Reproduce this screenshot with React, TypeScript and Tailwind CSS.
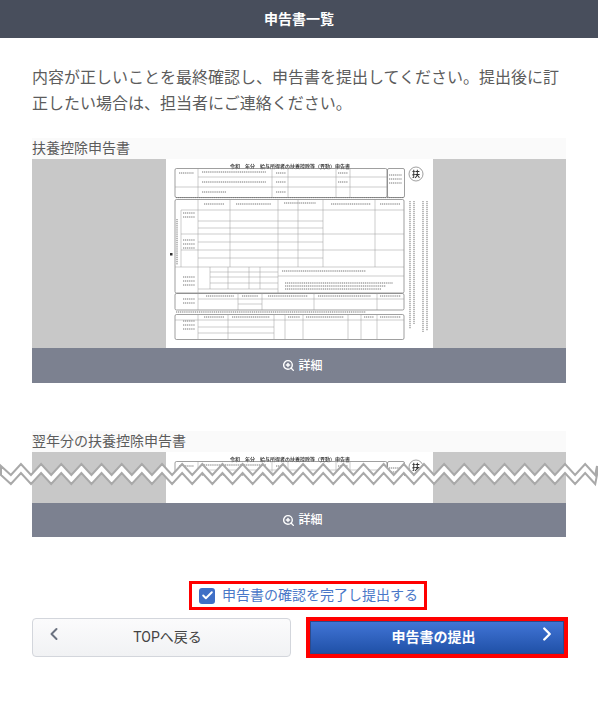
import React from 'react';
import { ChevronLeft, ChevronRight, Check, ZoomIn } from 'lucide-react';

// [x1, y1, x2, y2] for the printed rules of the form
const formLines = [
  // top box
  [32, 9, 32, 38], [106, 9, 106, 38], [122, 9, 122, 38], [170, 9, 170, 38], [184, 9, 184, 38],
  [32, 18, 221, 18], [32, 28, 221, 28], [9, 28, 32, 28],
  // main box
  [15, 51, 15, 108], [32, 40, 32, 134], [64, 40, 64, 108], [112, 40, 112, 134], [132, 40, 132, 108], [157, 40, 157, 108], [209, 40, 209, 108],
  [15, 51, 238, 51], [32, 62, 157, 62], [15, 75, 238, 75], [32, 69, 157, 69], [15, 91, 238, 91], [32, 83, 157, 83], [32, 99, 157, 99], [9, 108, 238, 108],
  [44, 108, 44, 130], [62, 108, 62, 130], [83, 108, 83, 130], [94, 108, 94, 130],
  [44, 113, 112, 113], [44, 118, 112, 118], [44, 124, 112, 124], [32, 130, 112, 130], [112, 117, 238, 117],
  // third box
  [32, 134, 32, 151], [72, 134, 72, 151], [96, 134, 96, 151], [148, 134, 148, 151], [211, 134, 211, 151],
  [32, 140, 238, 140], [72, 145, 96, 145],
  // fourth box
  [32, 156, 32, 180], [62, 156, 62, 180], [108, 156, 108, 180], [119, 156, 119, 180], [137, 156, 137, 180], [182, 156, 182, 180], [195, 156, 195, 180], [211, 156, 211, 180],
  [9, 161, 238, 161], [32, 168, 108, 168], [32, 174, 108, 174],
];

// [x1, y1, x2, y2] for the rows of tiny print
const printLines = [
  [10, 38.6, 238, 38.6], [10, 153, 200, 153],
  [11, 60, 11, 106], [17, 54, 29, 54], [17, 58, 29, 58], [17, 81, 29, 81], [17, 85, 29, 85], [17, 89, 29, 89],
  [17, 118, 29, 118], [17, 122, 29, 122], [17, 126, 29, 126], [17, 140, 29, 140], [17, 144, 29, 144],
  [17, 162, 29, 162], [17, 166, 29, 166], [17, 170, 29, 170],
  [119, 124, 227, 124], [119, 127, 220, 127], [119, 130, 215, 130], [116, 112, 200, 112],
  [38, 45, 58, 45], [70, 45, 105, 45], [118, 44, 150, 44], [165, 45, 205, 45], [214, 45, 234, 45],
  [13, 14, 28, 14], [36, 13, 100, 13], [36, 23, 100, 23], [36, 33, 60, 33], [110, 14, 120, 14], [110, 23, 120, 23], [110, 33, 120, 33],
  [172, 14, 182, 14], [172, 23, 182, 23], [223, 16, 236, 16], [223, 20, 236, 20], [223, 24, 236, 24],
  [40, 137, 68, 137], [76, 137, 92, 137], [102, 137, 142, 137], [152, 137, 205, 137], [214, 137, 235, 137],
  [38, 158, 58, 158], [66, 158, 104, 158], [122, 158, 134, 158], [140, 158, 178, 158], [198, 158, 208, 158], [214, 158, 235, 158],
];

// notes printed sideways at the right of the sheet
const sideLines = [
  [244, 42, 244, 170], [248, 42, 248, 165], [257, 42, 257, 173], [261, 42, 261, 172],
];

const FormSheet = () => (
  <svg viewBox="0 0 267 189" className="block h-[189px] w-[267px] blur-[0.4px]">
    <text x="124" y="9" textAnchor="middle" fontSize="5" fill="#444" fontFamily="'Noto Sans CJK JP', sans-serif" fontWeight="700">
      令和　年分　給与所得者の扶養控除等（異動）申告書
    </text>
    <g fill="none" stroke="#777" strokeWidth="0.7">
      <rect x="9" y="9.5" width="212" height="29" rx="1.5" />
      <rect x="221.5" y="9.5" width="17" height="29" rx="1.5" />
      <rect x="9" y="40.5" width="229" height="93.5" rx="1.5" />
      <rect x="9" y="134.5" width="229" height="16.5" rx="1.5" />
      <rect x="9" y="155.5" width="229" height="25" rx="1.5" />
      <circle cx="250" cy="15" r="7" />
    </g>
    <text x="250" y="18" textAnchor="middle" fontSize="8" fill="#333" fontFamily="'Noto Sans CJK JP', sans-serif" fontWeight="700">
      扶
    </text>
    <g stroke="#999" strokeWidth="0.5">
      {formLines.map(([x1, y1, x2, y2], i) => (
        <line key={i} x1={x1} y1={y1} x2={x2} y2={y2} />
      ))}
    </g>
    <g stroke="#777" strokeWidth="1" strokeDasharray="1.2 0.7">
      {printLines.map(([x1, y1, x2, y2], i) => (
        <line key={i} x1={x1} y1={y1} x2={x2} y2={y2} />
      ))}
    </g>
    <g stroke="#aaa" strokeWidth="1.6" strokeDasharray="1.2 0.8">
      {sideLines.map(([x1, y1, x2, y2], i) => (
        <line key={i} x1={x1} y1={y1} x2={x2} y2={y2} />
      ))}
    </g>
    <rect x="4" y="94" width="2.5" height="2.5" fill="#333" />
  </svg>
);

const DetailButton = ({ height }: { height: string }) => (
  <button className={`flex w-full items-center justify-center gap-[3px] bg-[#7c8190] pl-[7px] text-[12px] font-medium text-white ${height}`}>
    <ZoomIn size={13} strokeWidth={2.6} />
    詳細
  </button>
);

// the break between the two previews, one zigzag tooth every 20px or so
const tornEdge = () => {
  const top: string[] = ['1,4'];
  const bottom: string[] = ['1,13'];
  for (let i = 0; i < 60; i++) {
    const x = 0.8 + i * 10.075;
    const y = i % 2 === 0 ? 0 : 11;
    if (i > 0) {
      top.push(`${x},${y + 2}`);
      bottom.push(`${x},${y + 11}`);
    }
  }
  top.push('597,4');
  bottom.push('597,13');
  return `${top.join(' ')} ${bottom.reverse().join(' ')}`;
};

const App = () => {
  return (
    <div className="relative min-h-[713px] bg-white font-['Roboto','Noto_Sans_CJK_JP',sans-serif]">
      <div className="flex h-[38px] items-center justify-center bg-[#484e5c] text-[14px] font-bold text-white">
        申告書一覧
      </div>

      <div className="px-[32px] pt-[27px]">
        <p className="mb-[21px] text-[16px] leading-[26px] text-[#5c5c5c]">
          内容が正しいことを最終確認し、申告書を提出してください。提出後に訂正したい場合は、担当者にご連絡ください。
        </p>

        <div className="mb-[48px]">
          <div className="h-[21px] bg-[#fafafa] text-[14px] leading-[21px] text-[#5c5c5c]">扶養控除申告書</div>
          <div className="flex h-[189px] justify-center bg-[#c8c8c8]">
            <div className="w-[267px] overflow-hidden bg-white">
              <FormSheet />
            </div>
          </div>
          <DetailButton height="h-[35px]" />
        </div>

        <div className="relative">
          <div className="h-[21px] bg-[#fafafa] text-[14px] leading-[21px] text-[#5c5c5c]">翌年分の扶養控除申告書</div>
          <div className="flex h-[51px] justify-center bg-[#c8c8c8]">
            <div className="w-[267px] bg-white">
              <div className="h-[24px] overflow-hidden">
                <FormSheet />
              </div>
            </div>
          </div>
          <DetailButton height="h-[34px]" />

          <svg viewBox="0 0 598 26" className="absolute left-[-32px] top-[31px] h-[26px] w-[598px]">
            <polygon points={tornEdge()} fill="#fff" stroke="#a9a9a9" strokeWidth="2" />
          </svg>
        </div>

        <div className="mt-[44px] flex pl-[157px]">
          <label className="flex h-[29px] w-[238px] items-center gap-[7px] border-[3px] border-[#ff0000] pl-[7px] text-[14px] text-[#4a78c8]">
            <span className="flex h-[16px] w-[16px] items-center justify-center rounded-[3px] bg-[#3f6fc6]">
              <Check size={13} strokeWidth={3.5} className="text-white" />
            </span>
            申告書の確認を完了し提出する
          </label>
        </div>

        <div className="mt-[7px] flex items-center gap-[15px]">
          <button className="relative flex h-[39px] w-[259px] shrink-0 items-center justify-center rounded-[4px] border border-[#d3d6dc] bg-gradient-to-b from-[#fbfbfc] to-[#f1f2f4] pl-[12px] text-[14px] text-[#444]">
            <ChevronLeft size={20} strokeWidth={2.4} className="absolute left-[11px] top-[5px] text-[#6b7280]" />
            TOPへ戻る
          </button>
          <button className="relative flex h-[41px] w-[262px] shrink-0 items-center justify-center border-[4px] border-[#ff0000] bg-gradient-to-b from-[#4276d8] to-[#1f50a6] pr-[7px] text-[14px] font-bold text-white shadow-[inset_0_0_0_1px_#2c4a8c]">
            申告書の提出
            <ChevronRight size={22} strokeWidth={2.6} className="absolute right-[6px] top-[2px] text-white" />
          </button>
        </div>
      </div>
    </div>
  );
};

export default App;
